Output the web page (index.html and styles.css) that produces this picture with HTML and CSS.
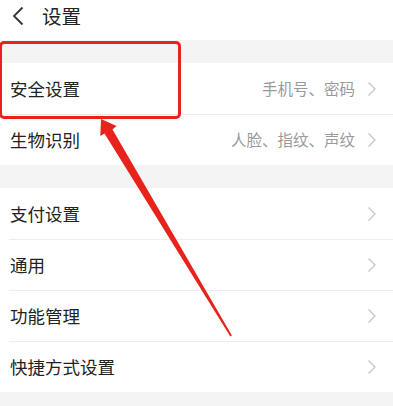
FILE: index.html
```html
<!DOCTYPE html>
<html lang="zh-CN">
<head>
<meta charset="utf-8">
<title>设置</title>
<link rel="stylesheet" href="styles.css">
</head>
<body>
<div class="page">
  <header class="header">
    <svg class="back" width="14" height="20" viewBox="0 0 14 20"><path d="M11.5 1.5 L3 10 L11.5 18.5" fill="none" stroke="#333" stroke-width="1.8"/></svg>
    <span class="title">设置</span>
  </header>
  <div class="gap"></div>
  <section class="group">
    <div class="item"><div class="item-body"><span class="label">安全设置</span><span class="sub">手机号、密码</span><svg class="chev" width="10" height="16" viewBox="0 0 10 16"><path d="M1.5 1.5 L8 8 L1.5 14.5" fill="none" stroke="#c6c6c6" stroke-width="1.3"/></svg></div></div>
    <div class="item"><div class="item-body"><span class="label">生物识别</span><span class="sub">人脸、指纹、声纹</span><svg class="chev" width="10" height="16" viewBox="0 0 10 16"><path d="M1.5 1.5 L8 8 L1.5 14.5" fill="none" stroke="#c6c6c6" stroke-width="1.3"/></svg></div></div>
  </section>
  <div class="gap"></div>
  <section class="group">
    <div class="item"><div class="item-body"><span class="label">支付设置</span><svg class="chev" width="10" height="16" viewBox="0 0 10 16"><path d="M1.5 1.5 L8 8 L1.5 14.5" fill="none" stroke="#c6c6c6" stroke-width="1.3"/></svg></div></div>
    <div class="item"><div class="item-body"><span class="label">通用</span><svg class="chev" width="10" height="16" viewBox="0 0 10 16"><path d="M1.5 1.5 L8 8 L1.5 14.5" fill="none" stroke="#c6c6c6" stroke-width="1.3"/></svg></div></div>
    <div class="item"><div class="item-body"><span class="label">功能管理</span><svg class="chev" width="10" height="16" viewBox="0 0 10 16"><path d="M1.5 1.5 L8 8 L1.5 14.5" fill="none" stroke="#c6c6c6" stroke-width="1.3"/></svg></div></div>
    <div class="item"><div class="item-body"><span class="label">快捷方式设置</span><svg class="chev" width="10" height="16" viewBox="0 0 10 16"><path d="M1.5 1.5 L8 8 L1.5 14.5" fill="none" stroke="#c6c6c6" stroke-width="1.3"/></svg></div></div>
  </section>
  <div class="highlight"></div>
  <svg class="arrow" width="393" height="406" viewBox="0 0 393 406">
    <polygon fill="#e8231b" points="101,119 116.5,126 112.5,129.5 231.9,335.5 230.3,336.5 104.5,133.5 100.3,136"/>
  </svg>
</div>
</body>
</html>
```
FILE: styles.css
```css
html, body {
  margin: 0;
  padding: 0;
  background: #f4f4f4;
}
body {
  font-family: "Noto Sans CJK SC", "Noto Sans", sans-serif;
  color: #222;
}
.page {
  position: relative;
  width: 393px;
  height: 406px;
  overflow: hidden;
  background: #f4f4f4;
}
.header {
  height: 40px;
  background: #fff;
  display: flex;
  align-items: center;
  padding-left: 11px;
  box-sizing: border-box;
}
.back {
  display: block;
  margin-top: -9px;
}
.title {
  font-size: 19.5px;
  margin-left: 17px;
  margin-top: -9px;
  color: #222;
  line-height: 1;
}
.gap {
  height: 23px;
}
.group {
  background: #fff;
}
.item {
  padding-left: 9px;
}
.item + .item .item-body {
  border-top: 1px solid #ededed;
}
.item-body {
  height: 51px;
  box-sizing: border-box;
  display: flex;
  align-items: center;
  padding-right: 16px;
}
.label {
  font-size: 17.5px;
  line-height: 1;
  margin-left: 1px;
  color: #222;
}
.sub {
  margin-left: auto;
  font-size: 15.5px;
  line-height: 1;
  color: #9a9a9a;
  margin-right: 12px;
}
.chev {
  display: block;
  flex: none;
}
.label + .chev {
  margin-left: auto;
}
.highlight {
  position: absolute;
  left: -1px;
  top: 41px;
  width: 182px;
  height: 78px;
  border: 3px solid #e8231b;
  border-radius: 5px;
  box-sizing: border-box;
}
.arrow {
  position: absolute;
  left: 0;
  top: 0;
}
```
